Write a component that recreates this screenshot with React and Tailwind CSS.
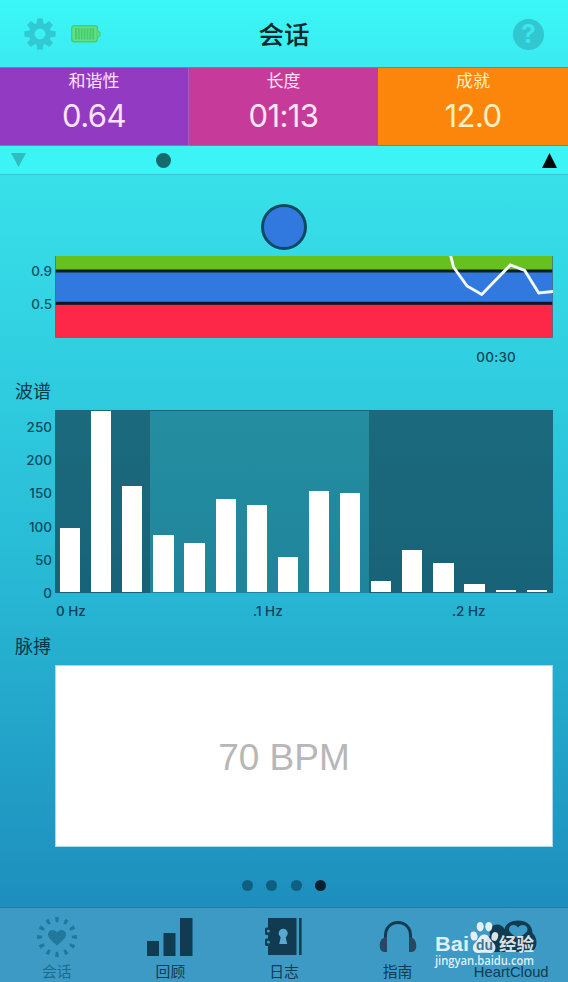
import React from "react";

const STATS = [
  { label: "和谐性", value: "0.64", box: "w-[188px] bg-[#933ac2]", text: "text-[#fbe4ff]" },
  { label: "长度", value: "01:13", box: "w-[190px] bg-[#c63b99] border-l border-[#a95bb5]", text: "text-[#ffe6f6]" },
  { label: "成就", value: "12.0", box: "w-[190px] bg-[#fc860c]", text: "text-[#fff0c4]" },
];

const BARS = [64, 181, 106, 57.5, 49.3, 93.5, 86.7, 34.7, 100.7, 98.8, 11, 42.4, 28.6, 7.7, 2, 2];

const TICKS = ["250", "200", "150", "100", "50", "0"];

function Gear() {
  return (
    <svg width="32" height="32" viewBox="-16 -16 32 32" className="text-[#31c9d2]">
      {[0, 45, 90, 135, 180, 225, 270, 315].map((a) => (
        <path key={a} d="M-3.6 -9 L-2.8 -15.6 H2.8 L3.6 -9Z" fill="currentColor" transform={`rotate(${a})`} />
      ))}
      <circle r="8.2" fill="none" stroke="currentColor" strokeWidth="5.5" />
    </svg>
  );
}

function Battery() {
  return (
    <svg width="30" height="18" viewBox="0 0 30 18">
      <rect x="0.7" y="0.7" width="25.6" height="16" rx="2.5" fill="#5fe08c" stroke="#47cf6c" strokeWidth="1.4" />
      <path d="M26.500 5.500L29 7.500V10.500L26.500 12.500" fill="#5fe08c" stroke="#47cf6c" strokeWidth="1.2" />
      {[4, 6.9, 9.8, 12.7, 15.6, 18.5, 21.4].map((x) => (
        <rect key={x} x={x} y="3" width="1.8" height="11.5" fill="#47cb66" />
      ))}
    </svg>
  );
}

function SessionIcon() {
  return (
    <svg width="42" height="42" viewBox="-21 -21 42 42" className="text-[#20789b]">
      {[0, 30, 60, 90, 120, 150, 180, 210, 240, 270, 300, 330].map((a) => (
        <path key={a} d="M-1.9 -20 H1.9 L1.2 -14.8 H-1.2Z" fill="currentColor" transform={`rotate(${a})`} />
      ))}
      <path d="M0 8.600C-3.200 5.400-9 1.600-9-2.400C-9-7.400-2.400-8.600 0-4.400C2.400-8.600 9-7.400 9-2.400C9 1.600 3.200 5.400 0 8.600Z" fill="currentColor" />
    </svg>
  );
}

function ReviewIcon() {
  return (
    <svg width="46" height="38" viewBox="0 0 46 38" fill="#103b50">
      <rect x="0" y="23" width="12" height="15" />
      <rect x="16.500" y="15" width="12" height="23" />
      <rect x="33" y="0" width="12.500" height="38" />
    </svg>
  );
}

function JournalIcon() {
  return (
    <svg width="37" height="37" viewBox="0 0 37 37" fill="#103b50">
      <path d="M3 0H31.500V37H3V28H1.500Q0 28 0 26.500V22Q0 20.500 1.500 20.500H3V17H1.500Q0 17 0 15.500V11Q0 9.500 1.500 9.500H3Z" />
      <rect x="34" y="0" width="2.600" height="37" />
      <rect x="2" y="11.700" width="2.800" height="2.800" rx="1" fill="#3d9ac4" />
      <rect x="2" y="22.800" width="2.800" height="2.800" rx="1" fill="#3d9ac4" />
      <circle cx="18.200" cy="15.200" r="4.500" fill="#5aa8cd" />
      <path d="M16.200 17H20.200L22.200 26H14.200Z" fill="#5aa8cd" />
    </svg>
  );
}

function GuideIcon() {
  return (
    <svg width="38" height="31" viewBox="0 0 38 31">
      <path d="M6.500 20V14.500C6.500 6.500 12 1.600 19 1.600S31.500 6.500 31.500 14.500V20" fill="none" stroke="#103b50" strokeWidth="3" />
      <path d="M8 16V31H5.500C2 31 .7 28 .7 24.500S2.500 17 6 16.500ZM30 16V31H32.500C36 31 37.300 28 37.300 24.500S35.500 17 32 16.500Z" fill="#254960" />
    </svg>
  );
}

function CloudIcon() {
  return (
    <svg width="52" height="33" viewBox="0 0 52 33">
      <path d="M8 32C3.500 32 0 28.500 0 24C0 20 2 17 5 16C3.500 9 7 4.500 12 4.500C15.500 4.500 18 6 19.500 9C20.500 4 26 .5 33 .5C41 .5 47.500 5 47.500 13C50 15.500 51.500 18.500 51.500 22.500C51.500 28.500 48 32 43 32Z" fill="#103b50" />
      <path d="M33 18.500C29.500 15.500 24 13 24 9.500C24 4.500 30 3.500 33 7.500C36 3.500 42.500 4.500 42.500 9.500C42.500 13 36.500 15.500 33 18.500Z" fill="#3d9ac4" />
    </svg>
  );
}

const TABS = [
  { label: "会话", icon: <SessionIcon />, color: "text-[#1c6d8d]" },
  { label: "回顾", icon: <ReviewIcon />, color: "text-[#103b50]" },
  { label: "日志", icon: <JournalIcon />, color: "text-[#103b50]" },
  { label: "指南", icon: <GuideIcon />, color: "text-[#103b50]" },
  { label: "HeartCloud", icon: <CloudIcon />, color: "text-[#103b50]" },
];

function Watermark() {
  return (
    <svg className="absolute left-[434px] top-[917px] font-['Open_Sans','Noto_Sans_CJK_SC',sans-serif]" width="106" height="54" viewBox="0 0 106 54" fill="#fff" fillOpacity="0.86">
      <text x="1" y="33.500" fontSize="19.500" fontWeight="700" textLength="34" lengthAdjust="spacingAndGlyphs" className="font-['Liberation_Sans',sans-serif]">Bai</text>
      <ellipse cx="40" cy="19" rx="3.500" ry="4.600" transform="rotate(-12 40 19)" />
      <ellipse cx="46.200" cy="9.700" rx="3.500" ry="4.800" />
      <ellipse cx="54.800" cy="9.700" rx="3.500" ry="4.800" />
      <ellipse cx="60.800" cy="19.500" rx="3.300" ry="4.500" transform="rotate(14 60.800 19.500)" />
      <path d="M50.300 17.500C55 17.500 56 22.500 59 25.500C63.500 29.500 61.500 36.500 56 36C52.500 35.500 48.500 35.500 45 36C38.500 36.500 37 29.500 41 26C44.500 22.500 45.500 17.500 50.300 17.500Z" />
      <text x="42" y="33" fontSize="14" fontWeight="700" textLength="17" lengthAdjust="spacingAndGlyphs" fill="#1f5f80" className="font-['Liberation_Sans',sans-serif]">du</text>
      <text x="65" y="33.500" fontSize="18" fontWeight="700" textLength="35" lengthAdjust="spacingAndGlyphs" className="font-['Noto_Sans_CJK_SC',sans-serif]">经验</text>
      <text x="1" y="48" fontSize="13" fontWeight="600" textLength="99" lengthAdjust="spacingAndGlyphs">jingyan.baidu.com</text>
    </svg>
  );
}

export default function App() {
  return (
    <div className="relative flex h-[982px] w-[568px] flex-col overflow-hidden bg-[#3cf4f6] font-['Inter','Noto_Sans_CJK_SC',sans-serif]">
      <header className="grid h-[67px] shrink-0 grid-cols-3 items-center bg-linear-to-b from-[#3bf7f7] to-[#3aeaf0] px-6 pt-px">
        <div className="flex items-center gap-[15px]">
          <Gear />
          <Battery />
        </div>
        <h1 className="pt-[2px] text-center text-[25.500px] leading-none font-medium text-[#06282b]">会话</h1>
        <div className="flex size-[31px] items-center justify-center justify-self-end rounded-full bg-[#31c6d0] text-[26px] leading-none font-bold text-[#39e7ed]">?</div>
      </header>

      <section className="flex h-[79px] shrink-0 border-y border-[#588ca6]">
        {STATS.map((s) => (
          <div key={s.label} className={`flex flex-col items-center ${s.box} ${s.text}`}>
            <div className="mt-[3px] h-5 text-[17px] leading-5">{s.label}</div>
            <div className="mt-[7px] text-[31px] leading-9 tracking-[-0.6px]">{s.value}</div>
          </div>
        ))}
      </section>

      <section className="flex h-7 shrink-0 items-center px-[11px]">
        <svg width="15" height="14" viewBox="0 0 15 14"><path d="M0 0H15L7.500 14Z" fill="#31bdc0" /></svg>
        <div className="mt-px ml-[130px] size-[15px] rounded-full bg-[#156b6c]" />
        <svg className="mt-px ml-auto" width="15" height="15" viewBox="0 0 15 15"><path d="M0 15H15L7.500 0Z" fill="#02090a" /></svg>
      </section>

      <main className="flex h-[733px] shrink-0 flex-col border-t border-[#32c6d4] bg-linear-to-b from-[#38e1ea] via-[#29bdd7] via-50% to-[#1e8ebd] pr-[15px]">
        <div className="mt-[29px] ml-[261px] size-[46px] rounded-full border-3 border-[#0b4a62] bg-[#3279df]" />

        <div className="mt-[6px] flex h-[82px]">
          <div className="w-[55px] shrink-0 pt-[7px] pr-[3px] text-right text-[13.500px] leading-4 font-medium text-[#0c5468]">
            <div>0.9</div>
            <div className="mt-[17px]">0.5</div>
          </div>
          <svg width="498" height="82" viewBox="0 0 498 82">
            <rect width="498" height="14" fill="#66c11f" />
            <rect y="16" width="498" height="31" fill="#3279df" />
            <rect y="48" width="498" height="33.500" fill="#fd2747" />
            <rect y="13.500" width="498" height="3" fill="#101e28" />
            <rect y="45.800" width="498" height="3" fill="#101526" />
            <path d="M.5 0V81.500H497.500V0" fill="none" stroke="#3c7688" strokeOpacity="0.8" />
            <polyline points="395.500,-1 398.500,11 412,30 426.700,38.500 455.300,9 469.700,14.500 483.700,37 498,35.500" fill="none" stroke="#f4fbff" strokeWidth="2.900" strokeLinejoin="miter" />
          </svg>
        </div>
        <div className="mt-[11px] pr-[37px] text-right text-[13.500px] leading-4 font-medium tracking-[0.2px] text-[#0b4657]">00:30</div>

        <h2 className="mt-[17px] ml-[15px] h-6 text-[18px] leading-5 text-[#083b4a]">波谱</h2>
        <div className="mt-[4px] flex h-[183px]">
          <div className="flex w-[55px] shrink-0 flex-col pt-[9px] pr-[3px] text-right text-[13.500px] font-medium text-[#0a4b61]">
            {TICKS.map((t) => (
              <div key={t} className="h-[33.200px] shrink-0 leading-4">{t}</div>
            ))}
          </div>
          <div className="flex h-[183px] w-[498px] items-end gap-[10.930px] border-t border-[#176b77] bg-[linear-gradient(90deg,#0f2a3b99_0_95px,#17465573_95px_314px,#0f2a3b99_314px)] pb-px pl-[5px]">
            {BARS.map((h, i) => (
              <div key={i} className="w-[20.200px] shrink-0 bg-white" style={{ height: h }} />
            ))}
          </div>
        </div>
        <div className="mt-[10px] flex h-4 pl-[56px] text-[13.500px] leading-4 font-medium text-[#0b405b]">
          <span className="w-[197px]">0 Hz</span>
          <span className="w-[199px]">.1 Hz</span>
          <span>.2 Hz</span>
        </div>

        <h2 className="mt-[18px] ml-[15px] h-6 text-[18px] leading-5 text-[#07354b]">脉搏</h2>
        <div className="mt-[4px] ml-[55px] flex h-[182px] items-center justify-center border border-[#a7dbe8] bg-white pt-[3px] pr-[40px] font-['Liberation_Sans',Arial,sans-serif] text-[37px] text-[#b7b7b7]">70 BPM</div>

        <div className="mt-[33px] ml-[242px] flex gap-[13.300px]">
          <span className="size-[11px] rounded-full bg-[#0f5f80]" />
          <span className="size-[11px] rounded-full bg-[#0f5f80]" />
          <span className="size-[11px] rounded-full bg-[#0f5f80]" />
          <span className="size-[11px] rounded-full bg-[#06202f]" />
        </div>
      </main>

      <nav className="grid h-[75px] shrink-0 grid-cols-5 border-t border-[#237b9d] bg-[#3d9ac4]">
        {TABS.map((t) => (
          <div key={t.label} className={`flex flex-col items-center ${t.color}`}>
            <div className="mt-[7px] flex h-[43px] items-center">{t.icon}</div>
            <div className="mt-[4px] font-['Liberation_Sans','Noto_Sans_CJK_SC',sans-serif] text-[14.800px] leading-5">{t.label}</div>
          </div>
        ))}
      </nav>
      <Watermark />
    </div>
  );
}
